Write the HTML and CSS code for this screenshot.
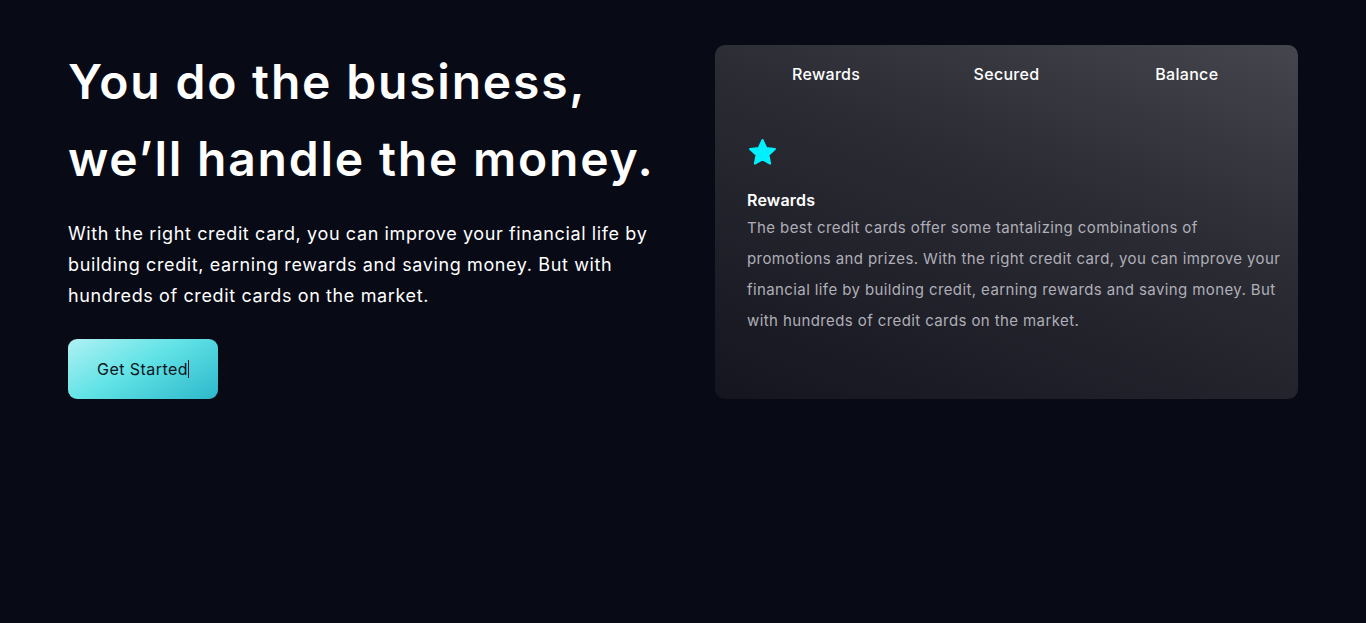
FILE: index.html
```html
<!DOCTYPE html>
<html lang="en">
<head>
<meta charset="utf-8">
<title>Business money</title>
<link rel="stylesheet" href="styles.css">
</head>
<body>
<main class="hero">
  <section class="intro">
    <h1 class="title">You do the business,<br>we’ll handle the money.</h1>
    <p class="lead">With the right credit card, you can improve your financial life by building credit, earning rewards and saving money. But with hundreds of credit cards on the market.</p>
    <a class="cta" href="#"><span>Get Started</span><span class="caret"></span></a>
  </section>
  <section class="card">
    <nav class="tabs">
      <span class="tab">Rewards</span>
      <span class="tab">Secured</span>
      <span class="tab">Balance</span>
    </nav>
    <div class="panel">
      <svg class="star" viewBox="0 0 24 24" width="31" height="31" aria-hidden="true">
        <path d="M12 2.3l2.9 6.2 6.7.8-5 4.6 1.3 6.7L12 17.3l-5.9 3.3 1.3-6.7-5-4.6 6.7-.8z" fill="#00f0ff" stroke="#00f0ff" stroke-width="1.6" stroke-linejoin="round"/>
      </svg>
      <h2 class="panel-title">Rewards</h2>
      <p class="panel-text">The best credit cards offer some tantalizing combinations of promotions and prizes. With the right credit card, you can improve your financial life by building credit, earning rewards and saving money. But with hundreds of credit cards on the market.</p>
    </div>
  </section>
</main>
</body>
</html>
```
FILE: styles.css
```css
* { box-sizing: border-box; }

html, body {
  margin: 0;
  height: 100%;
  background: #080a16;
}

body {
  font-family: "Inter", "Noto Sans", sans-serif;
  color: #ffffff;
}

.hero {
  display: flex;
  align-items: stretch;
  gap: 55px;
  padding: 45px 68px 0;
}

.intro {
  width: 592px;
  flex: none;
}

.title {
  margin: -2px 0 0;
  font-size: 48px;
  font-weight: 600;
  line-height: 77px;
  letter-spacing: 1.8px;
}

.lead {
  margin: 21px 0 0;
  font-size: 18px;
  line-height: 31px;
  letter-spacing: 0.62px;
  color: #ffffff;
}

.cta {
  display: inline-flex;
  align-items: center;
  justify-content: center;
  width: 150px;
  height: 60px;
  margin-top: 28px;
  border-radius: 9px;
  background: linear-gradient(150deg, #b0f1f3 0%, #62e3e6 45%, #2cb8cb 100%);
  color: #0d1420;
  font-size: 16px;
  letter-spacing: 0.45px;
  text-decoration: none;
}

.caret {
  width: 1px;
  height: 18px;
  background: #0d1420;
}

.card {
  width: 583px;
  flex: none;
  border-radius: 10px;
  background: linear-gradient(200deg, #45454d 0%, #2c2c35 40%, #15151f 100%);
}

.tabs {
  display: grid;
  grid-template-columns: repeat(3, 1fr);
  padding: 17px 21px 0;
}

.tab {
  text-align: center;
  font-size: 16px;
  font-weight: 500;
  line-height: 24px;
  letter-spacing: 0.3px;
}

.panel {
  padding: 51px 14px 0 32px;
}

.star {
  display: block;
}

.panel-title {
  margin: 20px 0 0;
  font-size: 16px;
  font-weight: 600;
  line-height: 24px;
  letter-spacing: 0.2px;
}

.panel-text {
  margin: 0;
  font-size: 15px;
  line-height: 31px;
  letter-spacing: 0.4px;
  color: #afafb7;
}
```
